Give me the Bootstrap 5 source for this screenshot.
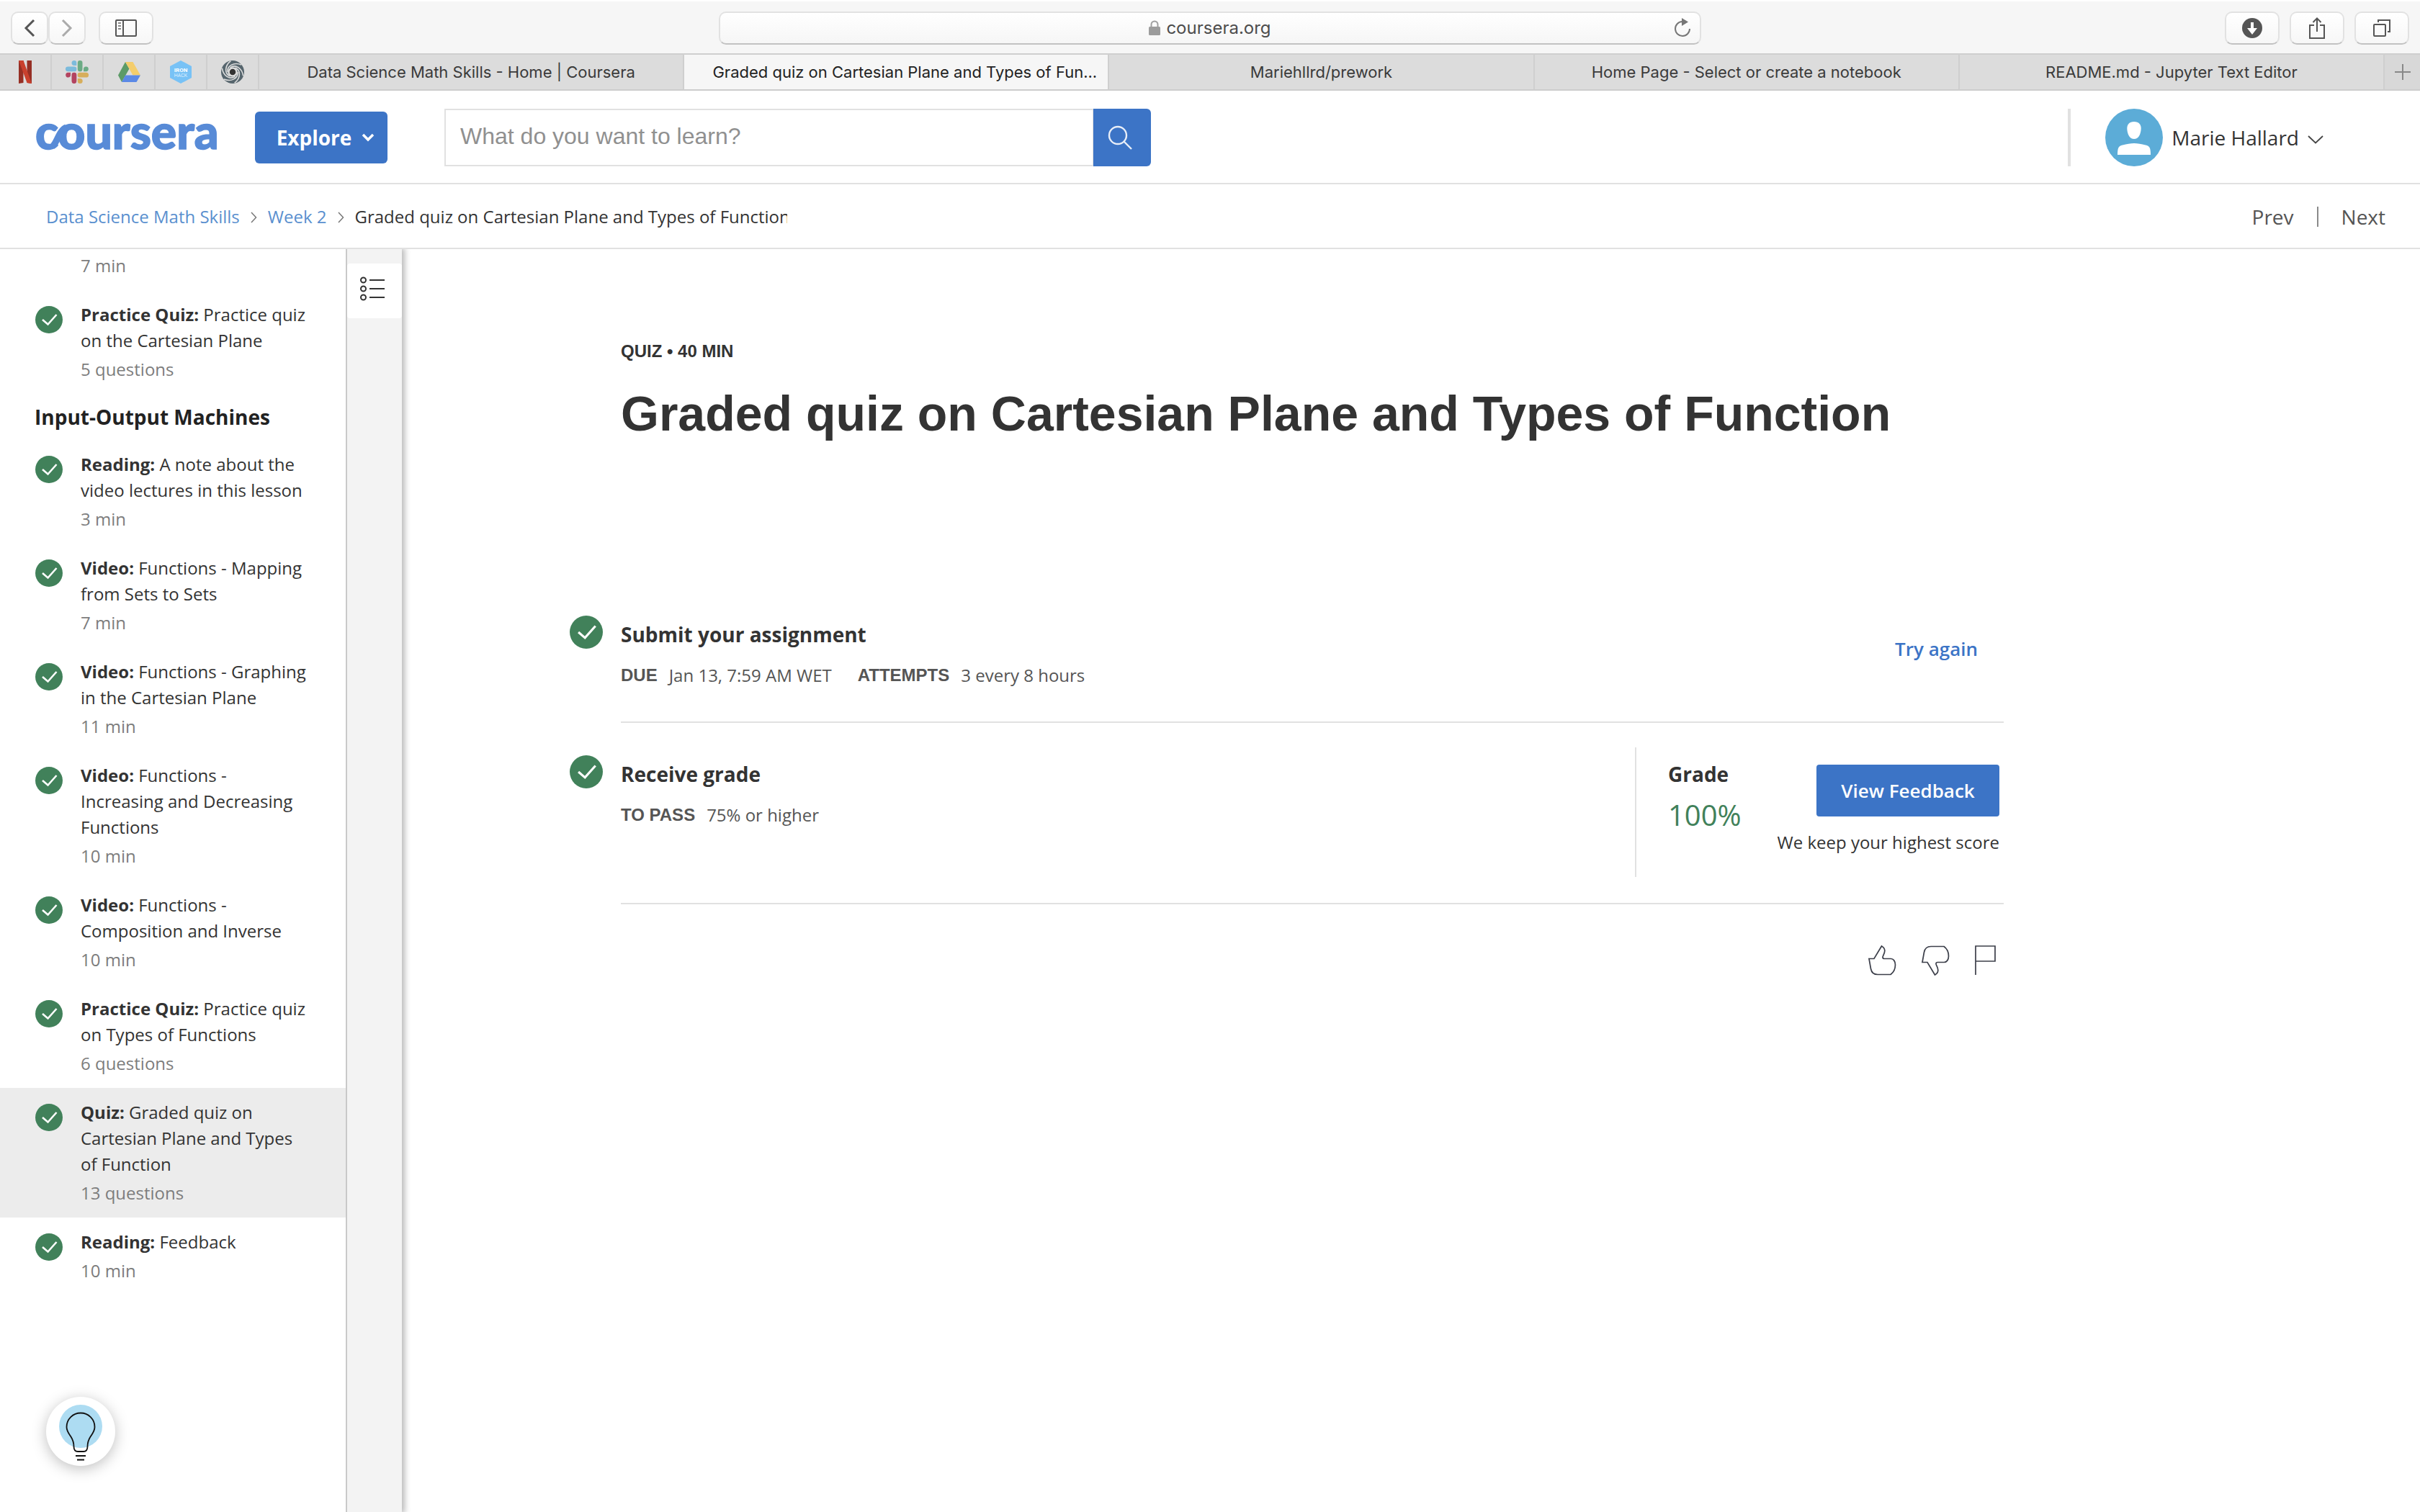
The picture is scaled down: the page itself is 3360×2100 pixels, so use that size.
<!DOCTYPE html>
<html lang="en">
<head>
<meta charset="utf-8">
<meta name="viewport" content="width=device-width, initial-scale=1">
<title>Graded quiz on Cartesian Plane and Types of Function | Coursera</title>
<link href="https://cdn.jsdelivr.net/npm/bootstrap@5.3.0/dist/css/bootstrap.min.css" rel="stylesheet">
<style>
:root{--blue:#3c74c6;--green:#41815a;--ink:#333;--soft:#555;--mute:#7d7d7d;--rule:#e1e1e1}
body{font-family:"Open Sans","Noto Sans",sans-serif;font-size:24px;line-height:36px;color:var(--ink);background:#fff}
svg{display:block;flex:none}
a{text-decoration:none;color:inherit}

/* browser chrome */
.chrome-bar{height:76px;background:#f6f6f6;border-top:2px solid #fff;border-bottom:2px solid #cfcfcf;padding:13px 15px 12px}
.chrome-ui{font-family:Inter,sans-serif}
.tool-btn{width:76px;height:46px;padding:0;border:2px solid #e2e2e2;border-bottom-color:#c2c2c2;border-radius:10px;background:linear-gradient(#fff,#f7f7f7);color:#555;display:flex;align-items:center;justify-content:center}
.tool-btn.slim{width:52px}
.side-tools{flex:1 1 0}
.tool-set{gap:14px}
.tool-gap{margin-left:18px}
.address{flex:0 1 1364px;height:46px;border:2px solid #e2e2e2;border-bottom-color:#c2c2c2;border-radius:10px;background:linear-gradient(#fff,#f6f6f6);font-size:24px;color:#4d4d4d;padding:0 12px 0 36px}
.tab-strip{height:50px;background:#dcdcdc;border-bottom:2px solid #cdcdcd;font-size:22px;color:#3a3a3a}
.pin{width:72px;border-right:2px solid #cfcfcf}
.page-tab{flex:1 1 0;min-width:0;border-right:2px solid #cfcfcf;white-space:nowrap}
.page-tab.current{background:#f6f6f6;color:#222}
.add-tab{width:49px;padding:0;border:0;background:#d8d8d8}

/* site header */
.site-head{height:130px;border-bottom:2px solid var(--rule);padding:2px 134px 0 50px}
.wordmark{width:304px}
.wordmark text{font-family:Lato,sans-serif;font-weight:900;font-size:66px}
.explore{height:72px;width:184px;background:var(--blue);border-radius:6px;font-weight:700;font-size:28px;color:#fff;padding:0 0 0 12px;gap:14px}
.explore:hover{background:#2f64b3;color:#fff}
.seek{width:980px;height:80px;margin-left:80px}
.seek .form-control{font-family:"Liberation Sans",sans-serif;font-size:32px;border:2px solid var(--rule);border-radius:6px 0 0 6px;padding:0 20px 4px;color:var(--ink)}
.seek .form-control::placeholder{color:#909090}
.seek .btn{width:80px;background:var(--blue);border-radius:0 6px 6px 0;padding:0 6px 0 0;display:flex;align-items:center;justify-content:center}
.account{border-left:4px solid var(--rule);height:80px;padding-left:48px;font-size:28px}
.account button{font-size:28px;color:var(--ink);background:none;border:0;padding:0;gap:12px}
.account .caret{margin-top:4px}
.crumbs{height:90px;border-bottom:2px solid var(--rule);padding:2px 48px 0 64px}
.crumbs a.up{color:#5a90cf}
.crumb-gap{margin:2px 15px 0}
.crumb-here{width:600px;overflow:hidden;white-space:nowrap}
.pager{font-size:28px;color:var(--soft)}
.pager .bar{width:2px;height:28px;background:#8a8a8a;margin:0 32px}

/* course outline */
.outline{width:482px;border-right:2px solid #c9c9c9;flex:none}
.step{display:flex;padding:16px 48px 16px 48px;gap:24px}
.step.first{padding-top:5px;padding-left:112px}
.step svg{margin-top:6px}
.step.on{background:#ececec}
.step .meta{display:block;color:var(--mute);margin-top:4px}
.step.first .meta{margin-top:0}
.unit{font-size:28px;line-height:64px;font-weight:700;color:#222;padding-left:48px;margin:0}
.rail{width:76px;flex:none;background:#f3f3f3;padding-top:20px;box-shadow:2px 0 8px 2px rgba(0,0,0,.28);clip-path:inset(0 -20px 0 0)}
.rail button{width:76px;height:76px;background:#fff;border:0;border-radius:4px;padding:0 0 6px 18px}

/* assignment */
main{padding-left:304px}
.sheet{max-width:1920px;padding-top:124px}
.eyebrow{font-family:"Liberation Sans",sans-serif;font-weight:700;margin:0}
.quiz-title{font-family:"Liberation Sans",sans-serif;font-weight:700;font-size:68px;line-height:96px;margin:20px 0 188px;white-space:nowrap}
.task{border-bottom:2px solid var(--rule);padding:34px 0 36px}
.task-info{gap:25px;margin-left:-71px;padding:11px 0 10px}
.task-text{padding-top:5px}
.task-name{font-size:28px;line-height:42px;font-weight:700;margin:0}
.facts{margin:18px 0 0;color:var(--soft);gap:36px}
.facts dt{font-family:"Liberation Sans",sans-serif;font-weight:700}
.facts dd{margin:0}
.facts div{gap:16px}
.again{font-size:26px;font-weight:600;color:var(--blue);padding:0 36px 8px 0}
.result{border-left:2px solid var(--rule);height:180px;padding:0 6px 0 44px;width:512px}
.score{font-size:40px;line-height:60px;color:var(--green);margin-top:6px}
.view{height:72px;width:254px;background:var(--blue);color:#fff;font-size:26px;font-weight:600;border-radius:4px;padding:0;margin-bottom:18px}
.view:hover{background:#2f64b3;color:#fff}
.react{padding:56px 9px 0 0;gap:32px}
.react button{border:0;background:none;padding:0}
.tip{position:fixed;left:64px;bottom:64px;width:96px;height:96px;border-radius:50%;border:0;padding:0;background:#fff;box-shadow:0 4px 20px rgba(0,0,0,.25)}
</style>
<script src="https://cdn.jsdelivr.net/npm/bootstrap@5.3.0/dist/js/bootstrap.bundle.min.js"></script>
</head>
<body class="d-flex flex-column min-vh-100">

<svg width="0" height="0" class="position-absolute" aria-hidden="true">
  <symbol id="done" viewBox="0 0 38 38"><circle cx="19" cy="19" r="19" fill="#41815a"/><path d="M10 19l7.500 6.500L29.500 12" fill="none" stroke="#fff" stroke-width="2.600"/></symbol>
</svg>

<div class="chrome-ui">
  <div class="chrome-bar d-flex align-items-center">
    <div class="side-tools d-flex">
      <button class="tool-btn slim" aria-label="Back"><svg width="16" height="26" viewBox="0 0 16 26" fill="none" stroke="#555" stroke-width="3"><path d="M14 2L3 13l11 11"/></svg></button>
      <button class="tool-btn slim" aria-label="Forward"><svg width="16" height="26" viewBox="0 0 16 26" fill="none" stroke="#ababab" stroke-width="3"><path d="M2 2l11 11L2 24"/></svg></button>
      <button class="tool-btn tool-gap" aria-label="Show sidebar"><svg width="30" height="24" viewBox="0 0 30 24" fill="none" stroke="#555" stroke-width="2"><rect x="1" y="1" width="28" height="22" rx="1"/><path d="M11 1v22"/><path d="M4 5h4M4 9h4M4 13h4" stroke="#888"/></svg></button>
    </div>
    <div class="address d-flex align-items-center">
      <span class="flex-fill d-flex align-items-center justify-content-center gap-2">
        <svg width="16" height="22" viewBox="0 0 16 22"><path d="M3.500 9V6a4.500 4.500 0 0 1 9 0v3" fill="none" stroke="#a0a0a0" stroke-width="2"/><rect y="9" width="16" height="12" rx="1.500" fill="#9c9c9c"/></svg>
        coursera.org</span>
      <svg width="24" height="28" viewBox="0 0 24 28"><path d="M11.500 5A10 10 0 1 0 22 15" fill="none" stroke="#777" stroke-width="2"/><path d="M11 0l9 5.500-9 5.500z" fill="#777"/></svg>
    </div>
    <div class="side-tools tool-set d-flex justify-content-end">
      <button class="tool-btn" aria-label="Downloads"><svg width="28" height="28" viewBox="0 0 28 28"><circle cx="14" cy="14" r="14" fill="#555"/><path d="M12 6h4v8h5l-7 9-7-9h5z" fill="#fff"/></svg></button>
      <button class="tool-btn" aria-label="Share"><svg width="24" height="30" viewBox="0 0 24 30" fill="none" stroke="#555" stroke-width="2"><path d="M8 11H2v18h20V11h-6M12 20V1.500M6.500 7L12 1.500 17.500 7"/></svg></button>
      <button class="tool-btn" aria-label="Show all tabs"><svg width="26" height="26" viewBox="0 0 26 26" fill="none" stroke="#555" stroke-width="2"><rect x="2" y="8" width="16" height="16" rx="1"/><path d="M8 5V2h16v16h-3"/></svg></button>
    </div>
  </div>
  <nav class="tab-strip d-flex" aria-label="Browser tabs">
    <a href="#" class="pin d-flex align-items-center justify-content-center" aria-label="Netflix"><svg width="18" height="32" viewBox="0 0 18 32"><path d="M0 0h6.500v31L0 32zM11.500 0H18v32l-6.500-1z" fill="#962f24"/><path d="M0 0h6.500L18 32l-6.500-1z" fill="#c9402d"/></svg></a>
    <a href="#" class="pin d-flex align-items-center justify-content-center" aria-label="Slack"><svg width="32" height="32" viewBox="0 0 32 32"><path d="M12 0a3.300 3.300 0 0 1 3.300 3.300V7H12a3.300 3.300 0 0 1 0-7zM3.300 8.500H12a3.300 3.300 0 0 1 0 6.800H3.300a3.300 3.300 0 0 1 0-6.800z" fill="#7cbbdc"/><path d="M20.200 0a3.300 3.300 0 0 1 3.300 3.300V12a3.300 3.300 0 0 1-6.700 0V3.300A3.300 3.300 0 0 1 20.200 0zM25 15.300V12a3.400 3.400 0 1 1 3.600 3.300z" fill="#6cab85"/><path d="M20.200 32a3.300 3.300 0 0 1-3.400-3.300V25h3.400a3.400 3.400 0 0 1 0 7zM20 16.800h8.700a3.300 3.300 0 0 1 0 6.700H20a3.300 3.300 0 0 1 0-6.700z" fill="#d7ae5b"/><path d="M7 16.800V20a3.400 3.400 0 1 1-3.700-3.200zM11.900 16.800a3.300 3.300 0 0 1 3.400 3.300v8.600a3.300 3.300 0 0 1-6.800 0v-8.600a3.300 3.300 0 0 1 3.400-3.300z" fill="#b34460"/></svg></a>
    <a href="#" class="pin d-flex align-items-center justify-content-center" aria-label="Google Drive"><svg width="32" height="28" viewBox="0 0 32 28"><path d="M11 0l5.500 9.500L6 28 1 18.500z" fill="#5c9b68"/><path d="M11 0h10.500L32 18.500H21.500z" fill="#f4cd6c"/><path d="M11 18.500h21L26.500 28H6z" fill="#5b89e6"/></svg></a>
    <a href="#" class="pin d-flex align-items-center justify-content-center" aria-label="Ironhack"><svg width="32" height="32" viewBox="0 0 32 32"><path d="M16 0l15 8v16l-15 8-15-8V8z" fill="#78c2f6"/><text x="16" y="15.500" font-family="Roboto,sans-serif" font-size="8" font-weight="700" text-anchor="middle" fill="#fff">IRON</text><text x="16" y="22.500" font-family="Roboto,sans-serif" font-size="7" font-weight="300" text-anchor="middle" fill="#fff">HACK</text></svg></a>
    <a href="#" class="pin d-flex align-items-center justify-content-center" aria-label="Vortex"><svg width="32" height="32" viewBox="0 0 32 32"><circle cx="16" cy="16" r="16" fill="#56656d"/><g fill="none" stroke="#dcdcdc" stroke-width="1.600"><path id="arm" d="M9 16C8 7 18 2 28 6"/><use href="#arm" transform="rotate(60 16 16)"/><use href="#arm" transform="rotate(120 16 16)"/><use href="#arm" transform="rotate(180 16 16)"/><use href="#arm" transform="rotate(240 16 16)"/><use href="#arm" transform="rotate(300 16 16)"/></g><circle cx="16" cy="16" r="5.500" fill="#333" stroke="#dcdcdc" stroke-width="2.500"/></svg></a>
    <a href="#" class="page-tab d-flex align-items-center justify-content-center">Data Science Math Skills - Home | Coursera</a>
    <a href="#" class="page-tab current d-flex align-items-center justify-content-center" aria-current="page"><span class="ps-4">Graded quiz on Cartesian Plane and Types of Fun...</span></a>
    <a href="#" class="page-tab d-flex align-items-center justify-content-center">Mariehllrd/prework</a>
    <a href="#" class="page-tab d-flex align-items-center justify-content-center">Home Page - Select or create a notebook</a>
    <a href="#" class="page-tab d-flex align-items-center justify-content-center">README.md - Jupyter Text Editor</a>
    <button class="add-tab d-flex align-items-center justify-content-center" aria-label="New tab"><svg width="22" height="22" viewBox="0 0 22 22" stroke="#888" stroke-width="2"><path d="M11 0v22M0 11h22"/></svg></button>
  </nav>
</div>

<header class="site-head d-flex align-items-center">
  <a href="#" class="wordmark"><svg width="260" height="64" viewBox="0 0 260 64" fill="#588bd7" stroke="#588bd7"><text x="-1" y="48" stroke-width="1.500">coursera</text><path d="M23 44C29 40 32 22 42 18" fill="none" stroke-width="9"/></svg></a>
  <button class="btn explore d-flex align-items-center justify-content-center">Explore <svg width="18" height="12" viewBox="0 0 18 12" fill="none" stroke="#fff" stroke-width="3.500"><path d="M2 2l7 7 7-7"/></svg></button>
  <form class="seek input-group flex-nowrap" role="search">
    <label class="visually-hidden" for="q">Search courses</label>
    <input class="form-control" id="q" type="text" placeholder="What do you want to learn?">
    <button class="btn" type="button" aria-label="Search"><svg width="34" height="34" viewBox="0 0 34 34" fill="none" stroke="#e8eef8" stroke-width="2.400"><circle cx="14" cy="14" r="12"/><path d="M22.500 22.500L33 33"/></svg></button>
  </form>
  <div class="account ms-auto d-flex align-items-center">
    <button class="d-flex align-items-center">
      <svg width="80" height="80" viewBox="0 0 80 80"><circle cx="40" cy="40" r="40" fill="#5cacd7"/><path d="M40 18c6.500 0 10 4 9.700 10-.5 8-3.700 14-9.700 14s-9.200-6-9.700-14c-.3-6 3.200-10 9.700-10z" fill="#fff"/><path d="M17 64c0-10 1.500-12 7-13.500C30 49 35 48 40 48s10 1 16 2.500c5.500 1.500 7 3.500 7 13.500z" fill="#fff"/></svg>
      Marie Hallard
      <svg class="caret" width="22" height="14" viewBox="0 0 22 14" fill="none" stroke="#444" stroke-width="1.800"><path d="M1 3l10 9.500L21 3"/></svg>
    </button>
  </div>
</header>

<div class="crumbs d-flex align-items-center">
  <nav class="d-flex align-items-center" aria-label="Breadcrumb">
    <a class="up" href="#">Data Science Math Skills</a>
    <svg class="crumb-gap" width="9" height="16" viewBox="0 0 9 16" fill="none" stroke="#777" stroke-width="1.500"><path d="M1 1l6.500 7L1 15"/></svg>
    <a class="up" href="#">Week 2</a>
    <svg class="crumb-gap" width="9" height="16" viewBox="0 0 9 16" fill="none" stroke="#777" stroke-width="1.500"><path d="M1 1l6.500 7L1 15"/></svg>
    <span class="crumb-here">Graded quiz on Cartesian Plane and Types of Function</span>
  </nav>
  <nav class="pager ms-auto d-flex align-items-center" aria-label="Lesson"><a href="#">Prev</a><span class="bar"></span><a href="#">Next</a></nav>
</div>

<div class="d-flex flex-fill">
  <nav class="outline" aria-label="Course outline">
    <a href="#" class="step first"><span class="meta">7 min</span></a>
    <a href="#" class="step"><svg width="40" height="38"><use href="#done"/></svg><span><b>Practice Quiz:</b> Practice quiz on the Cartesian Plane<span class="meta">5 questions</span></span></a>
    <h2 class="unit">Input-Output Machines</h2>
    <a href="#" class="step"><svg width="40" height="38"><use href="#done"/></svg><span><b>Reading:</b> A note about the video lectures in this lesson<span class="meta">3 min</span></span></a>
    <a href="#" class="step"><svg width="40" height="38"><use href="#done"/></svg><span><b>Video:</b> Functions - Mapping from Sets to Sets<span class="meta">7 min</span></span></a>
    <a href="#" class="step"><svg width="40" height="38"><use href="#done"/></svg><span><b>Video:</b> Functions - Graphing in the Cartesian Plane<span class="meta">11 min</span></span></a>
    <a href="#" class="step"><svg width="40" height="38"><use href="#done"/></svg><span><b>Video:</b> Functions - Increasing and Decreasing Functions<span class="meta">10 min</span></span></a>
    <a href="#" class="step"><svg width="40" height="38"><use href="#done"/></svg><span><b>Video:</b> Functions - Composition and Inverse<span class="meta">10 min</span></span></a>
    <a href="#" class="step"><svg width="40" height="38"><use href="#done"/></svg><span><b>Practice Quiz:</b> Practice quiz on Types of Functions<span class="meta">6 questions</span></span></a>
    <a href="#" class="step on" aria-current="true"><svg width="40" height="38"><use href="#done"/></svg><span><b>Quiz:</b> Graded quiz on Cartesian Plane and Types of Function<span class="meta">13 questions</span></span></a>
    <a href="#" class="step"><svg width="40" height="38"><use href="#done"/></svg><span><b>Reading:</b> Feedback<span class="meta">10 min</span></span></a>
  </nav>
  <div class="rail">
    <button aria-label="Toggle outline"><svg width="36" height="34" viewBox="0 0 36 34" fill="none" stroke="#333" stroke-width="2"><circle cx="4.500" cy="5" r="3.500"/><circle cx="4.500" cy="17" r="3.500"/><circle cx="4.500" cy="29" r="3.500"/><path d="M13 5h21M13 17h21M13 29h21"/></svg></button>
  </div>

  <main class="flex-fill">
    <div class="sheet">
      <p class="eyebrow">QUIZ • 40 MIN</p>
      <h1 class="quiz-title">Graded quiz on Cartesian Plane and Types of Function</h1>

      <section class="task d-flex align-items-center justify-content-between">
        <div class="task-info d-flex">
          <svg width="46" height="46"><use href="#done"/></svg>
          <div class="task-text">
            <h2 class="task-name">Submit your assignment</h2>
            <dl class="facts d-flex">
              <div class="d-flex"><dt>DUE</dt><dd>Jan 13, 7:59 AM WET</dd></div>
              <div class="d-flex"><dt>ATTEMPTS</dt><dd>3 every 8 hours</dd></div>
            </dl>
          </div>
        </div>
        <a href="#" class="again">Try again</a>
      </section>

      <section class="task d-flex align-items-start justify-content-between">
        <div class="task-info d-flex">
          <svg width="46" height="46"><use href="#done"/></svg>
          <div class="task-text">
            <h2 class="task-name">Receive grade</h2>
            <dl class="facts d-flex">
              <div class="d-flex"><dt>TO PASS</dt><dd>75% or higher</dd></div>
            </dl>
          </div>
        </div>
        <div class="result d-flex justify-content-between">
          <div class="pt-3">
            <h3 class="task-name">Grade</h3>
            <div class="score">100%</div>
          </div>
          <div class="d-flex flex-column align-items-end pt-4">
            <button class="btn view">View Feedback</button>
            <span>We keep your highest score</span>
          </div>
        </div>
      </section>

      <div class="react d-flex justify-content-end">
        <button aria-label="Like"><svg width="42" height="44" viewBox="0 0 42 44" fill="none" stroke="#3c3f4a" stroke-width="1.700"><path d="M2 19.500h7L19.500 2c3.500 2 5 5 4 8.500-.6 3-2.500 5-2.500 7 0 1.500.8 2 2.300 2h9c3.500 0 6.200 3.500 6.200 8.500 0 6-3 11-6.500 13.500H14c-5 0-8.500-2.500-9.500-8z"/></svg></button>
        <button aria-label="Dislike"><svg width="42" height="44" viewBox="0 0 42 44" fill="none" stroke="#3c3f4a" stroke-width="1.700"><path d="M2 24.500h7L19.500 42c3.500-2 5-5 4-8.500-.6-3-2.500-5-2.500-7 0-1.500.8-2 2.300-2h9c3.500 0 6.200-3.500 6.200-8.500 0-6-3-11-6.500-13.500H14c-5 0-8.500 2.500-9.500 8z"/></svg></button>
        <button aria-label="Report a problem"><svg width="32" height="44" viewBox="0 0 32 44" fill="none" stroke="#3c3f4a" stroke-width="1.700"><path d="M2 42V2h27v21H2"/></svg></button>
      </div>
    </div>
  </main>
</div>

<button class="tip" aria-label="Help"><svg width="96" height="96" viewBox="0 0 96 96"><circle cx="48" cy="41" r="30" fill="#addcf2"/><path d="M38.500 69c0-5-.5-8-4-13.500-3-4.500-6-8-6-13.500a19.500 19.500 0 0 1 39 0c0 5.500-3 9-6 13.500-3.500 5.500-4 8.500-4 13.500 0 5-2.500 7-5.500 7h-8c-3 0-5.500-2-5.500-7z" fill="none" stroke="#111" stroke-width="1.800"/><path d="M41 82h14M43 87.500h10" stroke="#111" stroke-width="2"/></svg></button>
</body>
</html>
